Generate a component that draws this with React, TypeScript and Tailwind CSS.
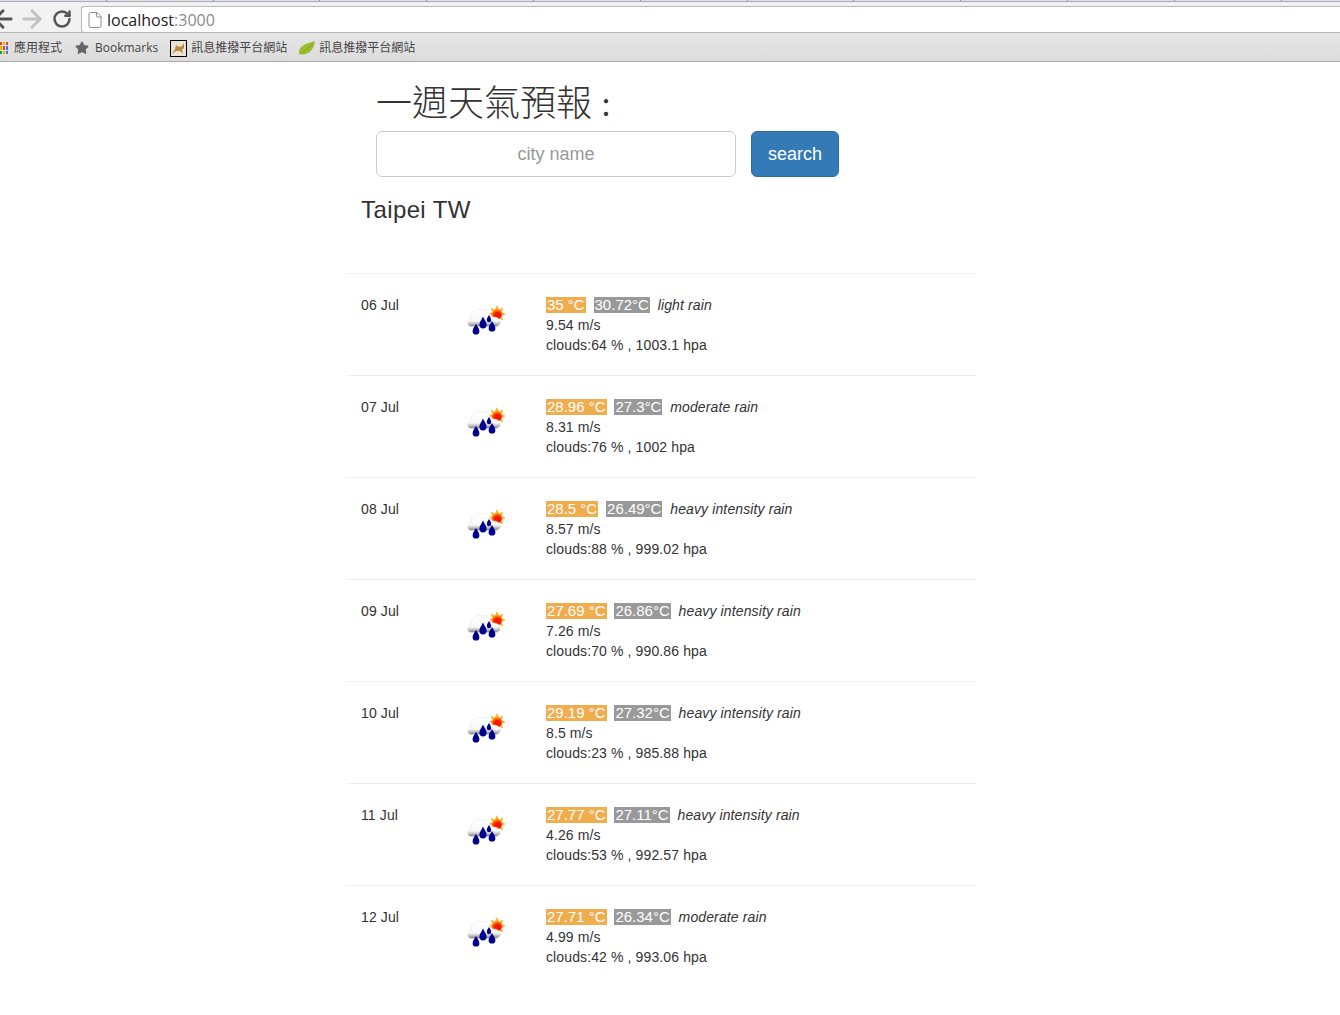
import { ArrowLeft, ArrowRight, RotateCw, File, Star } from "lucide-react";

const days = [
  { date: "06 Jul", max: "35 °C", min: "30.72°C", desc: "light rain", wind: "9.54 m/s", info: "clouds:64 % , 1003.1 hpa" },
  { date: "07 Jul", max: "28.96 °C", min: "27.3°C", desc: "moderate rain", wind: "8.31 m/s", info: "clouds:76 % , 1002 hpa" },
  { date: "08 Jul", max: "28.5 °C", min: "26.49°C", desc: "heavy intensity rain", wind: "8.57 m/s", info: "clouds:88 % , 999.02 hpa" },
  { date: "09 Jul", max: "27.69 °C", min: "26.86°C", desc: "heavy intensity rain", wind: "7.26 m/s", info: "clouds:70 % , 990.86 hpa" },
  { date: "10 Jul", max: "29.19 °C", min: "27.32°C", desc: "heavy intensity rain", wind: "8.5 m/s", info: "clouds:23 % , 985.88 hpa" },
  { date: "11 Jul", max: "27.77 °C", min: "27.11°C", desc: "heavy intensity rain", wind: "4.26 m/s", info: "clouds:53 % , 992.57 hpa" },
  { date: "12 Jul", max: "27.71 °C", min: "26.34°C", desc: "moderate rain", wind: "4.99 m/s", info: "clouds:42 % , 993.06 hpa" },
];

function WeatherIcon() {
  const rays = [0, 45, 90, 135, 180, 225, 270, 315];
  return (
    <svg width="38" height="32" viewBox="0 0 38 32" className="block">
      <defs>
        <linearGradient id="cloud" x1="0" y1="0" x2="0" y2="1">
          <stop offset="0" stopColor="#ffffff" />
          <stop offset="0.68" stopColor="#f8f8f8" />
          <stop offset="0.9" stopColor="#a8a8a8" />
          <stop offset="1" stopColor="#777777" />
        </linearGradient>
        <radialGradient id="sun" cx="0.55" cy="0.65" r="0.65">
          <stop offset="0.45" stopColor="#f41800" />
          <stop offset="1" stopColor="#ffb400" />
        </radialGradient>
      </defs>
      {rays.map((r) => (
        <path key={r} d="M30 0 L31.8 4 L28.2 4 Z" fill="#f9b233" transform={`rotate(${r} 30 9)`} />
      ))}
      <circle cx="30" cy="9" r="5.2" fill="url(#sun)" />
      <path
        d="M4 21.5 C0 21.5 -0.5 15.5 3.5 14.5 C3 8.5 9.5 2 15 5 C18.5 2.5 23 6.5 23.5 12 C28 11.5 33.5 13 33.5 17 C33.5 19.8 31 21.5 28 21.5 Z"
        fill="url(#cloud)"
        stroke="#e6e6e6"
        strokeWidth="0.6"
      />
      <path d="M9 19 C7.4 22 5.6 23.8 5.6 26.2 A3.4 3.4 0 0 0 12.4 26.2 C12.4 23.8 10.6 22 9 19 Z" fill="#00008f" />
      <path d="M16 11.5 C14.4 15 12.4 17 12.4 19.8 A3.6 3.6 0 0 0 19.6 19.8 C19.6 17 17.6 15 16 11.5 Z" fill="#00008f" />
      <path d="M22 10 C21 12 19.8 13.2 19.8 15 A2.2 2.2 0 0 0 24.2 15 C24.2 13.2 23 12 22 10 Z" fill="#00008f" />
      <path d="M25 16 C23.6 19 21.6 20.6 21.6 23.2 A3.4 3.4 0 0 0 28.4 23.2 C28.4 20.6 26.4 19 25 16 Z" fill="#00008f" />
    </svg>
  );
}

function Toolbar() {
  return (
    <header className="font-['Open_Sans','Noto_Sans_CJK_TC',sans-serif] tracking-normal">
      <div className="flex h-[2px] overflow-hidden border-b border-b-[#a9adb5] bg-[#dfe1e4]">
        {Array.from({ length: 13 }).map((_, i) => (
          <span key={i} className="w-[106.8px] shrink-0 border-r border-r-[#8f949c]" />
        ))}
      </div>
      <div className="flex h-[31px] items-start border-b border-b-[#b5b5b5] bg-[#f2f2f2]">
        <div className="mt-[3px] ml-[-11px] flex w-[92px] items-start">
          <ArrowLeft size={28} strokeWidth={2.5} className="text-[#555555]" />
          <ArrowRight size={28} strokeWidth={2.5} className="ml-px text-[#c2c2c2]" />
          <RotateCw size={20} strokeWidth={3} className="mt-1 ml-[6px] text-[#555555]" />
        </div>
        <div className="mt-[4px] flex h-[27px] flex-1 items-center rounded-l-[3px] border border-r-0 border-[#b9b9b9] bg-white pl-[4px]">
          <File size={18} strokeWidth={1.25} className="text-[#888888]" />
          <span className="ml-[3px] text-[16px] leading-none text-[#222222]">
            localhost<span className="text-[#8a8a8a]">:3000</span>
          </span>
        </div>
      </div>
      <div className="flex h-[29px] items-center border-b border-b-[#aaaaaa] bg-gradient-to-b from-[#e6e6e6] to-[#dcdcdc] pt-[2px] text-[12px] text-[#444444]">
        <div className="grid h-[12px] w-[8px] grid-cols-3 gap-px">
          {["bg-[#e8452c]", "bg-[#f4b400]", "bg-[#e8452c]", "bg-[#f4b400]", "bg-[#e8452c]", "bg-[#3b78e7]", "bg-[#0f9d58]", "bg-[#f4b400]", "bg-[#3b78e7]"].map((c, i) => (
            <span key={i} className={c} />
          ))}
        </div>
        <span className="ml-[6px]">應用程式</span>
        <Star size={14} fill="#666666" className="ml-[13px] text-[#666666]" />
        <span className="ml-[6px]">Bookmarks</span>
        <span className="ml-[12px] flex h-[17px] w-[17px] items-center justify-center border border-black bg-[#e8e4d8]">
          <svg width="15" height="15" viewBox="0 0 15 15">
            <path d="M1 13 L4 8 L5 4 L8 6 L11 5 L13 2 L13 7 L11 9 L12 13 L9 10 L5 10 Z" fill="#b98a3e" />
          </svg>
        </span>
        <span className="ml-[4px]">訊息推撥平台網站</span>
        <svg width="17" height="15" viewBox="0 0 17 15" className="ml-[11px]">
          <path d="M1 13 C0 6 6 3 17 0 C16 9 10 15 1 13 Z" fill="#9dbb2c" />
          <path d="M3 13 C7 9 11 7 15 3" stroke="#7f9a1f" strokeWidth="0.8" fill="none" />
        </svg>
        <span className="ml-[4px]">訊息推撥平台網站</span>
      </div>
    </header>
  );
}

export default function App() {
  return (
    <div className="min-h-[1015px] bg-white font-['Liberation_Sans','Noto_Sans_CJK_TC',sans-serif] text-[14px] leading-5 tracking-[0.12px] text-[#333333]">
      <Toolbar />
      <main className="ml-[346px] w-[630px]">
        <h1 className="ml-[30px] mt-[22px] h-[40px] font-['Liberation_Serif','Noto_Sans_CJK_TC',serif] text-[36px] leading-[40px] font-light tracking-normal text-[#333333]">
          一週天氣預報 :
        </h1>
        <div className="ml-[30px] mt-[7px] flex gap-[15px] tracking-normal">
          <input
            placeholder="city name"
            className="h-[46px] w-[360px] rounded-md border border-[#cccccc] text-center text-[18px] placeholder:text-[#999999]"
          />
          <button type="button" className="h-[46px] w-[88px] rounded-md border border-[#2e6da4] bg-[#337ab7] text-[18px] text-white">
            search
          </button>
        </div>
        <h2 className="ml-[15px] mt-[16px] text-[24px] leading-[34px] font-normal tracking-[0.4px]">Taipei TW</h2>
        <div className="mt-[46px]">
          {days.map((d) => (
            <div key={d.date} className="flex h-[102px] border-t border-[#eeeeee] pb-5 pt-[21px]">
              <div className="ml-[15px] w-[100px]">{d.date}</div>
              <div className="ml-[6px] mt-[10px] w-[79px]">
                <WeatherIcon />
              </div>
              <div>
                <div className="flex items-center gap-[7.85px]">
                  <span className="bg-[#f0ad4e] px-px text-[15px] leading-4 tracking-normal text-white">{d.max}</span>
                  <span className="bg-[#999999] px-px text-[15px] leading-4 tracking-normal text-white">{d.min}</span>
                  <em>{d.desc}</em>
                </div>
                <div>{d.wind}</div>
                <div>{d.info}</div>
              </div>
            </div>
          ))}
        </div>
      </main>
    </div>
  );
}
